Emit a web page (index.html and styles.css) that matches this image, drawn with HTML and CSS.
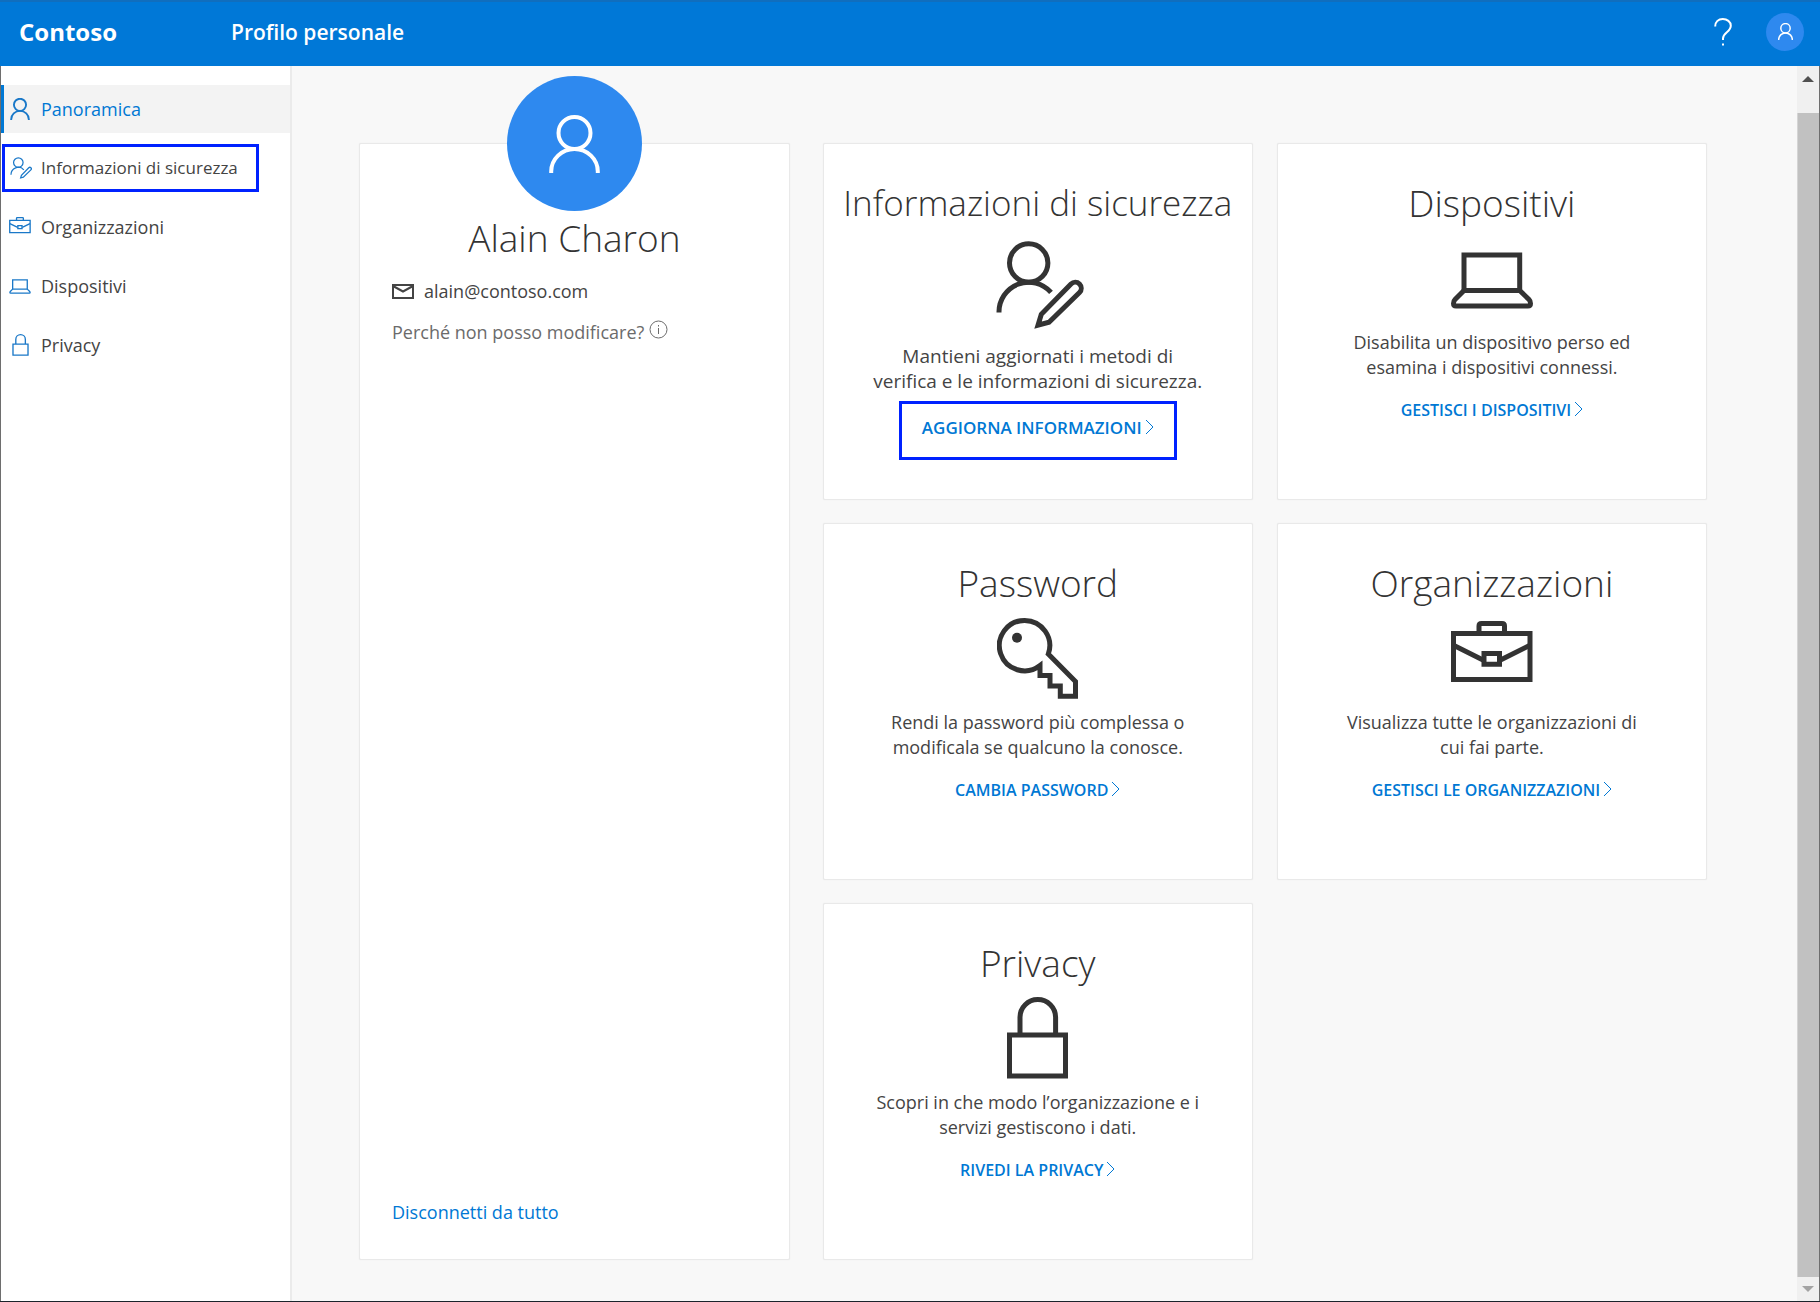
FILE: index.html
```html
<!DOCTYPE html>
<html lang="it">
<head>
<meta charset="utf-8">
<meta name="viewport" content="width=device-width, initial-scale=1">
<title>Profilo personale</title>
<link rel="stylesheet" href="styles.css">
</head>
<body>
<svg class="sprite" aria-hidden="true">
  <symbol id="person" viewBox="0 0 51 58"><circle cx="25.5" cy="18" r="16"/><path d="M2.2 58V56.5a23.3 22.5 0 0 1 46.6 0V58"/></symbol>
  <symbol id="person-edit" viewBox="-5 0 93 88"><circle cx="32.7" cy="22" r="19.2"/><path d="M3 71.5A29.7 29.7 0 0 1 55 51.3"/><path d="M42 84.2 45.3 73.3 75 43a6 6 0 0 1 8.5 8.5L53 81.2Z"/></symbol>
  <symbol id="laptop" viewBox="0 -4 82 61"><path d="M13 38.5V3H68.700V38.500Z"/><path d="M13 38.500 4 47.500Q2.500 49 2.500 51.500 2.500 54 5 54H77Q79.500 54 79.500 51.500 79.500 49 78 47.500L68.700 38.500"/></symbol>
  <symbol id="key" viewBox="0 0 82 82"><path d="M51.300 37 78.500 64.500V79.300H63.300V69H53V58.500H43V48.500A25.200 25.200 0 1 1 51.300 37Z"/><circle class="dot" cx="20" cy="20.700" r="5"/></symbol>
  <symbol id="briefcase" viewBox="0 0 82 75"><path d="M2.500 12.500H79V58.500H2.500Z"/><path d="M28 12V5q0-2.500 2.500-2.500H51q2.500 0 2.500 2.500V12M3 24.500 32 39M78.500 24.500 49.500 39"/><path d="M33 32.500H48.500V43.300H33Z"/></symbol>
  <symbol id="lock" viewBox="0 0 61 82"><path d="M2.500 38H58.500V79H2.500Z"/><path d="M13 37V20.300a17.800 17.800 0 0 1 35.600 0V37"/></symbol>
  <symbol id="chevron" viewBox="0 0 9 16"><path d="M1 1 8 8 1 15"/></symbol>
</svg>

<header class="topbar">
  <a class="brand" href="#">Contoso</a>
  <h1 class="page-title">Profilo personale</h1>
  <button class="icon-button" type="button" aria-label="Guida">
    <svg class="help" viewBox="0 0 18 28"><path d="M1.200 8.500C1.200 3.500 4.500 1 8.800 1S16.800 3.700 16.800 7.800C16.800 14 9 14.500 9 20.500V22"/><path d="M9 25.500V27.500"/></svg>
  </button>
  <button class="icon-button account" type="button" aria-label="Account">
    <svg class="account-icon"><use href="#person"/></svg>
  </button>
</header>

<div class="shell">
  <nav class="sidebar">
    <a class="nav-item active" href="#"><span class="nav-icon"><svg width="20" height="22"><use href="#person"/></svg></span>Panoramica</a>
    <a class="nav-item marked" href="#"><span class="nav-icon"><svg width="23" height="22"><use href="#person-edit"/></svg></span>Informazioni di sicurezza</a>
    <a class="nav-item" href="#"><span class="nav-icon"><svg width="22" height="20"><use href="#briefcase"/></svg></span>Organizzazioni</a>
    <a class="nav-item" href="#"><span class="nav-icon"><svg width="22" height="16"><use href="#laptop"/></svg></span>Dispositivi</a>
    <a class="nav-item" href="#"><span class="nav-icon"><svg width="17" height="22"><use href="#lock"/></svg></span>Privacy</a>
  </nav>

  <main class="content">
    <section class="card profile">
      <div class="avatar"><svg width="51" height="58"><use href="#person"/></svg></div>
      <h2 class="heading">Alain Charon</h2>
      <p class="email"><svg width="22" height="15" viewBox="0 0 22 15"><path d="M1 1H21V14H1ZM1 2 11 7.500 21 2"/></svg>alain@contoso.com</p>
      <p class="why">Perché non posso modificare?<svg width="19" height="19" viewBox="0 0 19 19"><circle cx="9.500" cy="9.500" r="8.500"/><path d="M9.500 8V14M9.500 5V6.500"/></svg></p>
      <a class="signout" href="#">Disconnetti da tutto</a>
    </section>

    <div class="tiles">
      <section class="card tile featured">
        <h2 class="heading">Informazioni di sicurezza</h2>
        <div class="tile-icon"><svg width="93" height="88"><use href="#person-edit"/></svg></div>
        <p class="text">Mantieni aggiornati i metodi di<br>verifica e le informazioni di sicurezza.</p>
        <a class="action" href="#">AGGIORNA INFORMAZIONI<svg class="chevron"><use href="#chevron"/></svg></a>
      </section>
      <section class="card tile">
        <h2 class="heading">Dispositivi</h2>
        <div class="tile-icon"><svg width="82" height="61"><use href="#laptop"/></svg></div>
        <p class="text">Disabilita un dispositivo perso ed<br>esamina i dispositivi connessi.</p>
        <a class="action" href="#">GESTISCI I DISPOSITIVI<svg class="chevron"><use href="#chevron"/></svg></a>
      </section>
      <section class="card tile">
        <h2 class="heading">Password</h2>
        <div class="tile-icon"><svg width="82" height="82"><use href="#key"/></svg></div>
        <p class="text">Rendi la password più complessa o<br>modificala se qualcuno la conosce.</p>
        <a class="action" href="#">CAMBIA PASSWORD<svg class="chevron"><use href="#chevron"/></svg></a>
      </section>
      <section class="card tile">
        <h2 class="heading">Organizzazioni</h2>
        <div class="tile-icon"><svg width="82" height="75"><use href="#briefcase"/></svg></div>
        <p class="text">Visualizza tutte le organizzazioni di<br>cui fai parte.</p>
        <a class="action" href="#">GESTISCI LE ORGANIZZAZIONI<svg class="chevron"><use href="#chevron"/></svg></a>
      </section>
      <section class="card tile">
        <h2 class="heading">Privacy</h2>
        <div class="tile-icon"><svg width="61" height="82"><use href="#lock"/></svg></div>
        <p class="text">Scopri in che modo l’organizzazione e i<br>servizi gestiscono i dati.</p>
        <a class="action" href="#">RIVEDI LA PRIVACY<svg class="chevron"><use href="#chevron"/></svg></a>
      </section>
    </div>
  </main>

  <div class="scrollbar" aria-hidden="true">
    <svg class="arrow-up" width="12" height="6" viewBox="0 0 12 6"><path d="M0 6 6 0 12 6Z"/></svg>
    <div class="thumb"></div>
    <svg class="arrow-down" width="12" height="6" viewBox="0 0 12 6"><path d="M0 0 6 6 12 0Z"/></svg>
  </div>
</div>
</body>
</html>
```
FILE: styles.css
```css
* { box-sizing: border-box; }

body {
  display: flex;
  flex-direction: column;
  min-height: 100vh;
  margin: 0;
  border-bottom: 2px solid #1b232b;
  background: #f8f8f8;
  color: #444;
  font: 18px/24px "Open Sans", "Noto Sans", sans-serif;
}

h1, h2, p { margin: 0; font-weight: 400; }
a { color: #0078d4; text-decoration: none; }
svg { flex: none; fill: none; stroke: currentColor; stroke-width: 5; }
.sprite { position: absolute; width: 0; height: 0; }
.dot { fill: currentColor; stroke: none; }

/* Top bar */
.topbar {
  display: flex;
  align-items: center;
  height: 66px;
  padding: 0 16px 3px 19px;
  background: #0078d7;
  box-shadow: inset 0 2px #106ebe;
  color: #fff;
}
.brand { width: 212px; color: #fff; font-size: 24px; font-weight: 700; }
.page-title { flex: 1; font-size: 21px; font-weight: 600; }
.icon-button {
  display: flex;
  align-items: center;
  justify-content: center;
  width: 38px;
  height: 38px;
  padding: 0;
  border: 0;
  border-radius: 50%;
  background: none;
  color: #fff;
}
.account { margin-left: 24px; background: #2e89ef; }
.help { width: 18px; height: 28px; stroke-width: 2; }
.account-icon { width: 15px; height: 17px; }

.shell { display: flex; flex: 1; border: solid #6e6e6e; border-width: 0 1px; }

/* Side navigation */
.sidebar {
  display: flex;
  flex: none;
  flex-direction: column;
  gap: 11px;
  width: 291px;
  padding-top: 19px;
  border-right: 2px solid #ebebeb;
  background: #fff;
}
.nav-item {
  display: flex;
  align-items: center;
  height: 48px;
  padding-left: 5px;
  border: solid transparent;
  border-width: 0 0 0 3px;
  color: #444;
}
.nav-icon { display: flex; justify-content: center; width: 22px; margin-right: 10px; color: #1a78c8; }
.nav-item.active { border-color: #0078d4; background: #f3f3f3; color: #0078d4; }
.nav-item.marked { width: 257px; margin-left: 1px; padding-left: 4px; border: 3px solid #0022ff; font-size: 17px; }

/* Cards */
.content {
  display: grid;
  flex: 1;
  grid-template-columns: 431fr 885fr;
  align-items: stretch;
  align-content: start;
  gap: 33px;
  padding: 77px 90px 41px 67px;
}
.card { border: 1px solid #e9e9e9; border-radius: 2px; background: #fff; box-shadow: 0 0 1px #e4e4e4; }
.heading { color: #333; font-size: 37px; font-weight: 300; line-height: 48px; }

.profile { display: flex; flex-direction: column; padding: 0 32px 35px; }
.avatar {
  display: flex;
  align-items: center;
  align-self: center;
  justify-content: center;
  width: 135px;
  height: 135px;
  margin-top: -68px;
  border-radius: 50%;
  background: #2e89ef;
  color: #fff;
}
.avatar svg { stroke-width: 4; }
.profile .heading { margin-top: 3px; text-align: center; }
.email { display: flex; align-items: center; gap: 10px; margin-top: 17px; }
.email svg { stroke-width: 2; }
.why { display: flex; gap: 5px; margin-top: 17px; color: #6b6b6b; }
.why svg { stroke-width: 1; }
.signout { margin-top: auto; }

.tiles { display: grid; grid-template-columns: 1fr 1fr; gap: 23px 24px; }
.tile {
  display: flex;
  flex-direction: column;
  align-items: center;
  min-height: 357px;
  padding-top: 35px;
  text-align: center;
}
.tile-icon {
  display: flex;
  align-items: center;
  justify-content: center;
  height: 82px;
  margin: 10px 0 11px;
  color: #333;
}
.text { line-height: 25px; }
.action { display: flex; gap: 3px; margin-top: 18px; font-size: 16px; font-weight: 600; }
.chevron { width: 9px; height: 16px; margin-top: 3px; stroke-width: 1; }

.featured .heading { font-size: 35px; }
.featured .tile-icon { height: 96px; }
.featured .text { font-size: 19px; }
.featured .action {
  height: 59px;
  margin-top: 7px;
  padding: 12px 20px 0;
  border: 3px solid #0022ff;
  font-size: 17px;
}

/* Scroll track */
.scrollbar {
  display: flex;
  flex: none;
  flex-direction: column;
  align-items: center;
  width: 22px;
  padding: 10px 0 9px;
  background: #f0f0f0;
}
.scrollbar svg { stroke: none; }
.arrow-up { fill: #505050; }
.arrow-down { fill: #a3a3a3; }
.thumb { flex: 1; width: 100%; margin: 31px 0 9px; border-left: 1px solid #d5d5d5; background: #c1c1c1; }
```
